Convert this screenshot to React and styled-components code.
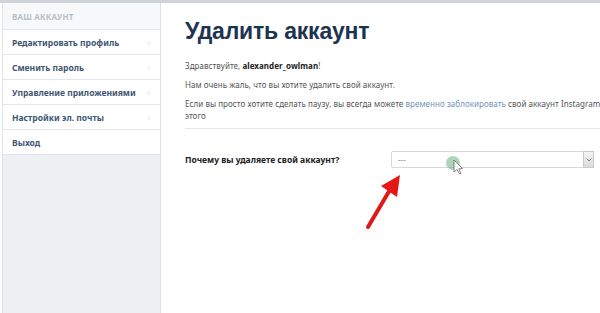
import React from 'react'
import styled, { createGlobalStyle } from 'styled-components'

const Global = createGlobalStyle`
    html, body {
        margin: 0;
        padding: 0;
        background: #fff;
        overflow: hidden;
    }
    body {
        font-family: "Noto Sans", "Open Sans", sans-serif;
    }
`

const Page = styled.div`
    width: 600px;
    height: 313px;
    display: flex;
    flex-direction: column;
    overflow: hidden;
    position: relative;
`

const TopRule = styled.div`
    height: 3px;
    background: #cfd4db;
    flex: none;
`

const Body = styled.div`
    display: flex;
    flex: 1;
`

const Sidebar = styled.nav`
    width: 157px;
    flex: none;
    margin-left: 2px;
    background: #eef1f4;
    border-left: 1px solid #e0e4e9;
    border-right: 1px solid #dcdfe4;
    display: flex;
    flex-direction: column;
`

const SideHeader = styled.div`
    height: 26px;
    display: flex;
    align-items: center;
    padding-left: 9px;
    background: #f7f8fa;
    color: #b9bec5;
    font-size: 8px;
    font-weight: 700;
    letter-spacing: 0.2px;
    text-transform: uppercase;
`

const SideItem = styled.div`
    height: 24px;
    display: flex;
    align-items: center;
    justify-content: space-between;
    padding: 0 10px 0 9px;
    background: #fff;
    border-top: 1px solid #e3e6ea;
    border-bottom: ${p => (p.$last ? '1px solid #e3e6ea' : 'none')};
    color: #3f5674;
    font-size: 8.5px;
    font-weight: 700;
`

const Chevron = styled.span`
    color: #e3e6ea;
    font-size: 10px;
    font-weight: 400;
`

const Main = styled.main`
    width: 456px;
    flex: none;
    padding: 15px 0 0 24px;
`

const Title = styled.h1`
    margin: 0 0 15px;
    font-family: "Liberation Sans", Arial, sans-serif;
    font-size: 23px;
    line-height: 27px;
    font-weight: 700;
    color: #1d3451;
    letter-spacing: -0.2px;
`

const Para = styled.p`
    margin: 0 0 ${p => (p.$wrap ? '6px' : '7px')};
    font-size: 8px;
    line-height: 12px;
    letter-spacing: 0.05px;
    color: #555;
    white-space: ${p => (p.$wrap ? 'normal' : 'nowrap')};
`

const Strong = styled.b`
    color: #222;
`

const Link = styled.span`
    color: #7393bb;
`

const Divider = styled.hr`
    margin: 0;
    border: none;
    border-top: 1px solid #e4e6ea;
`

const ReasonRow = styled.div`
    display: flex;
    align-items: center;
    margin-top: 22px;
`

const Label = styled.label`
    width: 206px;
    font-size: 8.5px;
    font-weight: 700;
    color: #222;
`

const Select = styled.div`
    width: 203px;
    height: 17px;
    border: 1px solid #d5d8dc;
    border-radius: 2px;
    display: flex;
    align-items: center;
    justify-content: space-between;
    font-size: 8px;
    color: #888;
    padding-left: 6px;
    box-sizing: border-box;
`

const SelectButton = styled.span`
    width: 11px;
    height: 17px;
    margin-right: -1px;
    background: linear-gradient(#f4f4f4, #dcdcdc);
    border: 1px solid #c9c9c9;
    box-sizing: border-box;
    display: flex;
    align-items: center;
    justify-content: center;
`

const Overlay = styled.svg`
    position: absolute;
    left: 0;
    top: 0;
    pointer-events: none;
`

const items = [
    'Редактировать профиль',
    'Сменить пароль',
    'Управление приложениями',
    'Настройки эл. почты',
]

const App = () => {
    return (
        <Page>
            <Global />
            <TopRule />
            <Body>
                <Sidebar>
                    <SideHeader>Ваш аккаунт</SideHeader>
                    {items.map(t => (
                        <SideItem key={t}>
                            {t}
                            <Chevron>›</Chevron>
                        </SideItem>
                    ))}
                    <SideItem $last>Выход</SideItem>
                </Sidebar>
                <Main>
                    <Title>Удалить аккаунт</Title>
                    <Para>
                        Здравствуйте, <Strong>alexander_owlman</Strong>!
                    </Para>
                    <Para>Нам очень жаль, что вы хотите удалить свой аккаунт.</Para>
                    <Para $wrap>
                        Если вы просто хотите сделать паузу, вы всегда можете{' '}
                        <Link>временно заблокировать</Link> свой аккаунт Instagram вместо
                        этого
                    </Para>
                    <Divider />
                    <ReasonRow>
                        <Label>Почему вы удаляете свой аккаунт?</Label>
                        <Select>
                            ---
                            <SelectButton>
                                <svg width="6" height="4" viewBox="0 0 6 4">
                                    <path d="M0.5 0.5 L3 3 L5.5 0.5" fill="none" stroke="#777" strokeWidth="0.9" />
                                </svg>
                            </SelectButton>
                        </Select>
                    </ReasonRow>
                </Main>
            </Body>
            <Overlay width="600" height="313" viewBox="0 0 600 313">
                <circle cx="453" cy="163" r="7" fill="#6db07f" opacity="0.55" />
                <path
                    d="M454 160 L454 172 L457 169.5 L459.5 174 L461 173.3 L458.8 168.8 L462.5 168.5 Z"
                    fill="#fff"
                    stroke="#666"
                    strokeWidth="0.8"
                />
                <line x1="368" y1="227" x2="391" y2="188" stroke="#e01818" strokeWidth="4" strokeLinecap="round" />
                <polygon points="400,175 381,186 397,197" fill="#e81515" />
            </Overlay>
        </Page>
    )
}

export default App
